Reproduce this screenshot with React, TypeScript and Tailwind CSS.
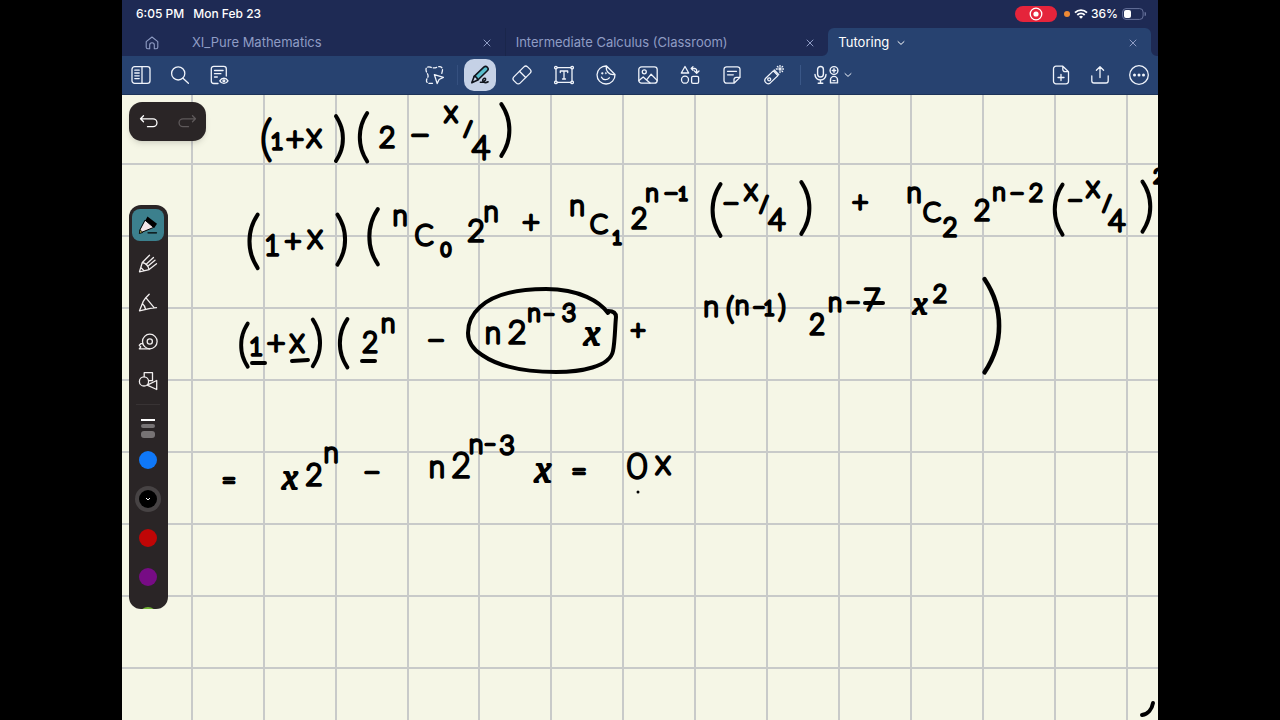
import type { ReactNode } from 'react';

// [text, center x, baseline, font size, cursive]
type Mark = [string, number, number, number, boolean?];

const inkLines: { id: string; marks: Mark[] }[] = [
  {
    id: 'line-1',
    marks: [
      ['(', 144, 60, 48], ['1', 155, 54, 22], ['+', 173, 55, 31], ['x', 192, 52, 34], [')', 218, 60, 52],
      ['(', 241, 60, 55], ['2', 265, 52, 28], ['−', 298, 53, 36], ['x', 329, 27, 30], ['/', 346, 41, 20],
      ['4', 359, 64, 31], [')', 384, 54, 60],
    ],
  },
  {
    id: 'line-2',
    marks: [
      ['(', 131, 166, 61], ['1', 150, 160, 27], ['+', 171, 157, 29], ['x', 193, 153, 34], [')', 220, 163, 57],
      ['(', 251, 162, 63], ['n', 278, 130, 27], ['C', 302, 150, 27], ['0', 324, 161, 17], ['2', 354, 146, 30],
      ['n', 369, 126, 27], ['+', 409, 138, 30], ['n', 455, 120, 28], ['C', 477, 138, 26], ['1', 495, 149, 17],
      ['2', 517, 133, 28], ['n', 530, 106, 24], ['−', 549, 107, 26], ['1', 561, 105, 17], ['(', 594, 134, 59],
      ['−', 609, 119, 30], ['x', 629, 105, 30], ['/', 642, 117, 21], ['4', 655, 135, 29], [')', 684, 132, 60],
      ['+', 738, 117, 28], ['n', 792, 107, 27], ['C', 810, 126, 26], ['2', 828, 141, 25], ['2', 860, 125, 28],
      ['n', 877, 105, 24], ['−', 895, 107, 26], ['2', 914, 106, 24], ['(', 936, 133, 58], ['−', 953, 115, 28],
      ['x', 971, 102, 30], ['/', 985, 116, 21], ['4', 995, 136, 29], [')', 1025, 130, 58], ['2', 1037, 88, 20],
    ],
  },
  {
    id: 'line-3',
    marks: [
      ['(', 122, 266, 49], ['1', 134, 260, 24], ['+', 154, 259, 32], ['x', 175, 257, 33], [')', 195, 265, 54],
      ['(', 221, 266, 56], ['2', 248, 257, 27], ['n', 266, 237, 26], ['−', 314, 256, 32],
      ['n', 371, 248, 29], ['2', 395, 248, 32], ['n', 412, 226, 24], ['−', 427, 226, 20], ['3', 447, 226, 24],
      ['x', 470, 250, 36, true], ['+', 516, 244, 26],
      ['n', 589, 221, 28], ['(', 608, 224, 30], ['n', 620, 219, 26], ['−', 637, 220, 22], ['1', 647, 220, 19],
      [')', 660, 222, 30], ['2', 695, 239, 27], ['n', 713, 216, 25], ['−', 731, 216, 26], ['7', 750, 215, 29],
      ['x', 798, 219, 32, true], ['2', 818, 207, 24], [')', 871, 265, 108],
    ],
  },
  {
    id: 'line-4',
    marks: [
      ['=', 107, 394, 24], ['x', 168, 394, 35, true], ['2', 192, 390, 29], ['n', 209, 367, 27], ['−', 250, 388, 30],
      ['n', 315, 382, 29], ['2', 339, 382, 33], ['n', 354, 358, 26], ['−', 368, 356, 20], ['3', 385, 359, 26],
      ['x', 421, 387, 37, true], ['=', 457, 385, 26], ['0', 515, 383, 34], ['x', 541, 379, 34],
    ],
  },
];

const gridX = [70, 142, 214, 286, 357, 429, 501, 573, 645, 717, 789, 861, 933, 1005];
const gridY = [69, 141, 213, 285, 357, 429, 501, 573];

const swatches = [
  { name: 'Blue', color: 'bg-[#0f78f8]' },
  { name: 'Black', color: 'bg-black', selected: true },
  { name: 'Red', color: 'bg-[#c00606]' },
  { name: 'Purple', color: 'bg-[#770c85]' },
  { name: 'Green', color: 'bg-[#76b838]' },
];

function Icon({ children }: { children: ReactNode }) {
  return (
    <svg
      viewBox="0 0 20 20"
      className="size-5"
      fill="none"
      stroke="currentColor"
      strokeWidth="1.3"
      strokeLinecap="round"
      strokeLinejoin="round"
      aria-hidden="true"
    >
      {children}
    </svg>
  );
}

function IconButton({ label, children, className = '' }: { label: string; children: ReactNode; className?: string }) {
  return (
    <button type="button" aria-label={label} className={`flex size-8 shrink-0 items-center justify-center ${className}`}>
      {children}
    </button>
  );
}

function CloseButton({ label }: { label: string }) {
  return (
    <button type="button" aria-label={label} className="flex size-4 items-center justify-center text-[#8f9cc4]">
      <svg viewBox="0 0 8 8" className="size-2" fill="none" stroke="currentColor" strokeWidth="1" strokeLinecap="round">
        <path d="M1 1l6 6M7 1L1 7" />
      </svg>
    </button>
  );
}

function Chevron() {
  return (
    <svg viewBox="0 0 8 8" className="size-2" fill="none" stroke="currentColor" strokeWidth="1" strokeLinecap="round" strokeLinejoin="round">
      <path d="M1 2.6L4 5.4l3-2.8" />
    </svg>
  );
}

function StatusBar() {
  return (
    <div className="flex h-7 items-center justify-between pr-3 pl-[14px] text-xs font-medium text-white">
      <div className="flex gap-[9px]">
        <span>6:05 PM</span>
        <span>Mon Feb 23</span>
      </div>
      <div className="flex items-center">
        <span className="flex h-4 w-[42px] items-center justify-center rounded-full bg-[#e5243b]">
          <svg viewBox="0 0 14 14" className="size-[14px]" fill="none" stroke="white" strokeWidth="1.3">
            <circle cx="7" cy="7" r="5.8" />
            <circle cx="7" cy="7" r="2.6" fill="white" stroke="none" />
          </svg>
        </span>
        <span className="ml-[7px] size-[6px] rounded-full bg-[#ee8a35]" />
        <svg viewBox="0 0 14 10" className="ml-1 h-[10px] w-[14px]" fill="none" stroke="white" strokeWidth="1.9">
          <path d="M1 3.6a8.6 8.6 0 0 1 12 0M3.3 6a5.4 5.4 0 0 1 7.4 0" />
          <path d="M7 9.8L5 7.7a2.9 2.9 0 0 1 4 0z" fill="white" stroke="none" />
        </svg>
        <span className="ml-[3px]">36%</span>
        <svg viewBox="0 0 24 12" className="ml-1 h-3 w-6" fill="none">
          <rect x=".6" y=".6" width="20.5" height="10.8" rx="3.4" stroke="#66719a" />
          <rect x="2" y="2" width="7" height="8" rx="2" fill="white" />
          <path d="M22.6 4v4a2 2 0 0 0 0-4z" fill="#66719a" />
        </svg>
      </div>
    </div>
  );
}

function Tabs() {
  return (
    <nav className="flex h-7 pr-[7px] text-[13px] text-[#8f9cc4]">
      <a href="#home" aria-label="Home" className="flex w-[60px] shrink-0 items-center justify-center pt-px">
        <svg viewBox="0 0 14 14" className="size-[14px]" fill="none" stroke="currentColor" strokeWidth="1.1" strokeLinejoin="round">
          <path d="M1.2 5.6L7 1l5.8 4.6v5.6a1.6 1.6 0 0 1-1.6 1.6H9.3V9a2.3 2.3 0 0 0-4.6 0v3.8H2.8a1.6 1.6 0 0 1-1.6-1.6z" />
        </svg>
      </a>
      <div className="flex min-w-0 flex-1 items-center justify-between border-r border-[#1a264b] px-[10px] pt-px">
        <a href="#pure">XI_Pure Mathematics</a>
        <CloseButton label="Close XI_Pure Mathematics" />
      </div>
      <div className="flex min-w-0 flex-1 items-center justify-between px-[10px] pt-px">
        <a href="#calculus">Intermediate Calculus (Classroom)</a>
        <CloseButton label="Close Intermediate Calculus (Classroom)" />
      </div>
      <div className="relative flex min-w-0 flex-1 items-center justify-between rounded-t-md bg-[#274270] px-[10px] pt-px text-white">
        <svg viewBox="0 0 6 6" className="absolute right-full bottom-0 size-[6px]" fill="#274270">
          <path d="M6 0v6H0a6 6 0 0 0 6-6z" />
        </svg>
        <a href="#tutoring" className="flex items-center gap-2">
          Tutoring
          <Chevron />
        </a>
        <CloseButton label="Close Tutoring" />
        <svg viewBox="0 0 6 6" className="absolute bottom-0 left-full size-[6px]" fill="#274270">
          <path d="M0 0v6h6a6 6 0 0 1-6-6z" />
        </svg>
      </div>
    </nav>
  );
}

function Toolbar() {
  return (
    <div className="flex h-[39px] items-center border-b border-[#1d3359] bg-[#274270] px-[3px] text-[#f0f4fb]">
      <div className="flex flex-1 gap-[7px]">
        <IconButton label="Sidebar">
          <Icon>
            <rect x="1" y="1.7" width="18" height="16.6" rx="2.6" />
            <path d="M11 1.7v16.6M3.8 5.2h4.4M3.8 8h4.4M3.8 10.8h4.4M3.8 13.6h4.4" />
          </Icon>
        </IconButton>
        <IconButton label="Search">
          <Icon>
            <circle cx="8.2" cy="8.4" r="6.6" />
            <path d="M13 13.3l5.4 5" />
          </Icon>
        </IconButton>
        <IconButton label="Outline">
          <Icon>
            <path d="M9 18.5H4.8a2.5 2.5 0 0 1-2.5-2.5V3.8a2.5 2.5 0 0 1 2.5-2.5h10a2.5 2.5 0 0 1 2.5 2.5V11M5.5 5.5h8.6M5.5 8.7h6.4M5.5 12h2.8" />
            <path d="M10.8 15.8c2-3.4 6.2-3.4 8.2 0-2 3.4-6.2 3.4-8.2 0z" />
            <circle cx="14.9" cy="15.8" r=".9" />
          </Icon>
        </IconButton>
      </div>

      <div className="flex items-center">
        <IconButton label="Lasso">
          <Icon>
            <path
              strokeDasharray="3.6 2"
              d="M7.5 18.3H4a2.5 2.5 0 0 1-2.5-2.8c0-2 1.6-2.6 1.6-4.6S1 7.5 1 4.5c0-3 3-2.9 4.5-2.3 2.5 1 4.5.9 7-.2 2.5-1 5 0 5 2.7 0 2-.8 3-.8 4.3"
            />
            <path d="M9.4 9.7l9 2.6-4.3 2.2-1.9 4.1z" />
          </Icon>
        </IconButton>
        <span className="mx-[6px] h-5 w-px bg-[#35507f]" />
        <div className="flex gap-[10px]">
          <IconButton label="Pen" className="rounded-[10px] bg-[#c5d1e6] text-[#10141c]">
            <Icon>
              <g strokeWidth="1.6">
                <path d="M4.2 11.3l9.6-9.1a2.5 2.5 0 0 1 3.5 3.6L7.8 15z" fill="#58bccb" />
                <path d="M4.2 11.3l-2.4 6.4 6-2.7c-.4-2-1.6-3.3-3.6-3.7z" fill="#c5d1e6" />
                <path d="M10.5 17.3c2.8-.3 5.4-1.6 5.1-3.4-.4-1.4-3-.5-2.9 1.6.1 2.4 3 2.7 5.4 1.3" />
              </g>
            </Icon>
          </IconButton>
          <IconButton label="Eraser">
            <Icon>
              <g transform="rotate(-45 10 10)">
                <rect x=".3" y="5.6" width="19.4" height="8.8" rx="2.6" />
                <path d="M10.8 5.6v8.8" />
              </g>
            </Icon>
          </IconButton>
          <IconButton label="Text">
            <Icon>
              <path d="M3.2 2.6h13.6M3.2 17.4h13.6M2 4v12M18 4v12" />
              <circle cx="1.9" cy="2.6" r="1.3" />
              <circle cx="18.1" cy="2.6" r="1.3" />
              <circle cx="1.9" cy="17.4" r="1.3" />
              <circle cx="18.1" cy="17.4" r="1.3" />
              <path d="M6.3 7.5V6h7.4v1.5M10 6v8M8.5 14h3" />
            </Icon>
          </IconButton>
          <IconButton label="Sticker">
            <Icon>
              <path d="M10.5 1A9 9 0 1 0 19 9.5zM10.5 1c-1 5 2.5 9.5 8.5 8.5" />
              <path d="M5.5 12.2c1.5 3 5.5 3.4 7.8.6" />
              <circle cx="6.3" cy="8.3" r=".5" fill="currentColor" />
              <circle cx="9.8" cy="8.3" r=".3" fill="currentColor" />
            </Icon>
          </IconButton>
          <IconButton label="Image">
            <Icon>
              <rect x=".8" y="1.8" width="18.4" height="16.4" rx="2.8" />
              <circle cx="6.3" cy="6.8" r="2" />
              <path d="M1 15.5l4.2-3.6 6.8 6.2M8.6 14.8l4.5-5.6 6 6.2" />
            </Icon>
          </IconButton>
          <IconButton label="Elements">
            <Icon>
              <path d="M5 1.5L8.7 8H1.3zM11.5 3.5h3.2a2 2 0 0 1 2 2v2.6M14.4 6l2.3 2.3L19 6M13 1.6l-1.8 1.9L13 5.4" />
              <circle cx="5" cy="14.7" r="3.5" />
              <rect x="11.6" y="11.3" width="7" height="7" rx="1.4" />
            </Icon>
          </IconButton>
          <IconButton label="Sticky note">
            <Icon>
              <path d="M12 18.2H4.6A2.6 2.6 0 0 1 2 15.6V4.4a2.6 2.6 0 0 1 2.6-2.6h10.8A2.6 2.6 0 0 1 18 4.4v8zM12 18.2v-3.6a2.2 2.2 0 0 1 2.2-2.2H18M5.5 6.3h9M5.5 9.8h5.8" />
            </Icon>
          </IconButton>
          <IconButton label="Laser pointer">
            <Icon>
              <path d="M1.7 13.2l7.6-7.3 4.6 4.7-7.6 7.3a3.3 3.3 0 0 1-4.6-4.7zM10.3 5l4.5 4.6" />
              <circle cx="5.2" cy="14.3" r="1.5" />
              <path d="M16 .4v1M16 6.6v1M12.3 4h1M18.7 4h1M13.4 1.4l.6.6M18 6l.6.6M18.6 1.4l-.6.6" />
              <circle cx="16" cy="4" r="1" />
            </Icon>
          </IconButton>
        </div>
        <span className="mx-[10px] h-5 w-px bg-[#3a5787]" />
        <button type="button" aria-label="Record" className="flex h-8 w-[50px] items-center gap-1 pl-[3px]">
          <svg viewBox="0 0 26 20" className="h-5 w-[26px]" fill="none" stroke="currentColor" strokeWidth="1.4" strokeLinecap="round" strokeLinejoin="round">
            <rect x="3.6" y="1.5" width="5.8" height="10.5" rx="2.9" />
            <path d="M1 9.5a5.5 5.5 0 0 0 11 0M6.5 15v3.3M4.2 18.3h4.6" />
            <circle cx="20" cy="5.5" r="3.9" />
            <path d="M20 3.8v3.4M18.3 5.5h3.4M16.5 17.9v-3a3.5 3.5 0 0 1 7 0v3zM19 15.6h2" />
          </svg>
          <Chevron />
        </button>
      </div>

      <div className="flex flex-1 justify-end gap-[7px]">
        <IconButton label="Add page">
          <Icon>
            <path d="M11.8 1.2H5a2.5 2.5 0 0 0-2.5 2.5v12.6A2.5 2.5 0 0 0 5 18.8h10a2.5 2.5 0 0 0 2.5-2.5V6.7zM11.8 1.2v3.3A2.2 2.2 0 0 0 14 6.7h3.5M10 9.5v6M7 12.5h6" />
          </Icon>
        </IconButton>
        <IconButton label="Share">
          <Icon>
            <path d="M1.8 10.8v5A2.2 2.2 0 0 0 4 18h12a2.2 2.2 0 0 0 2.2-2.2v-5M10 12.5V1.8M6.4 5.3L10 1.7l3.6 3.6" />
          </Icon>
        </IconButton>
        <IconButton label="More">
          <Icon>
            <circle cx="10" cy="10" r="9.3" />
            <g fill="currentColor" stroke="none">
              <circle cx="5.5" cy="10" r="1.5" />
              <circle cx="10" cy="10" r="1.5" />
              <circle cx="14.5" cy="10" r="1.5" />
            </g>
          </Icon>
        </IconButton>
      </div>
    </div>
  );
}

function History() {
  return (
    <div className="absolute top-[7px] left-[7px] flex rounded-[13px] bg-[#2a2526] text-white shadow-md shadow-black/10">
      <button type="button" aria-label="Undo" className="flex h-[39px] w-[39px] items-center justify-center">
        <Icon>
          <path d="M4.5 3.8l-3 3 3 3M1.5 6.8H14a3.9 3.9 0 0 1 0 7.9H8.5" />
        </Icon>
      </button>
      <button type="button" aria-label="Redo" disabled className="flex h-[39px] w-[38px] items-center justify-center text-[#5e595a]">
        <Icon>
          <path d="M15.5 3.8l3 3-3 3M18.5 6.8H6a3.9 3.9 0 0 0 0 7.9h5.5" />
        </Icon>
      </button>
    </div>
  );
}

function Palette() {
  return (
    <div className="absolute top-[110px] left-[7px] flex h-[404px] w-[39px] flex-col items-center overflow-hidden rounded-[12px] bg-[#2a2526] pt-1 pr-px text-[#f1eeee]">
      <div className="flex flex-col gap-[7px]">
        <IconButton label="Fountain pen" className="rounded-lg bg-[#3c808d]">
          <Icon>
            <path d="M9.5 1.5L19 8.8 16.2 13 7.3 5.6z" fill="#000" stroke="none" />
            <path d="M7.3 5.4l8.3 7L4.5 17l-2.8.8.4-3z" fill="#f3e6e8" stroke="#000" strokeWidth="1" />
            <path d="M1.4 18.2l.6-3.4 2.6 2.4z" fill="#b9a84a" stroke="#000" strokeWidth=".8" />
            <path d="M10 17.8h8.5" stroke="#000" />
          </Icon>
        </IconButton>
        <IconButton label="Ballpoint pen">
          <Icon>
            <path d="M11.5 1.2L4.3 8.5 1.5 17.8l9.6-2.2 7.4-5.9M4.3 8.5c3 .6 6 3.3 6.8 7.1M15.5 3.5l-7.3 6.7M2.8 13.5l3.2 3.2M17 6.2l-6.3 5.3" />
          </Icon>
        </IconButton>
        <IconButton label="Brush pen">
          <Icon>
            <path d="M11.2 1.2L7.8 4.7l-2.7 4-3.6 9.1 10.8-2.5 6.2-.6M7.8 4.7l8.3 10M4.5 10.8c1.5 1.2 2.8 3.3 3 5.4" />
          </Icon>
        </IconButton>
        <IconButton label="Tape">
          <Icon>
            <circle cx="11.8" cy="9.5" r="7.3" />
            <circle cx="11.8" cy="9.5" r="2.6" />
            <path d="M11.8 16.8H1.3l1.5-1.9-1.5-1.7 1.5-1.5h1.9" />
          </Icon>
        </IconButton>
        <IconButton label="Shapes">
          <Icon>
            <path d="M6.2 5.6V1.7h8.3v8h-3.6" />
            <circle cx="6" cy="10.4" r="4.6" />
            <path d="M9.2 14.2l9.5-4.7v9z" />
          </Icon>
        </IconButton>
      </div>
      <span className="my-[7px] h-px w-6 shrink-0 bg-[#383334]" />
      <button type="button" aria-label="Stroke width" className="flex h-8 w-8 shrink-0 flex-col items-center justify-center gap-[3px]">
        <span className="h-[2px] w-[14px] bg-white" />
        <span className="h-1 w-[14px] rounded-sm bg-[#777374]" />
        <span className="h-[7px] w-[14px] rounded-[3px] bg-[#777374]" />
      </button>
      <div className="flex flex-col gap-[7px]">
        {swatches.map((swatch) => (
          <IconButton key={swatch.name} label={swatch.name}>
            {swatch.selected ? (
              <span className="flex size-[26px] items-center justify-center rounded-full bg-[#474344] text-white">
                <span className={`flex size-[18px] items-center justify-center rounded-full ${swatch.color}`}>
                  <svg viewBox="0 0 6 6" className="size-[6px]" fill="none" stroke="currentColor">
                    <path d="M1 2l2 2 2-2" />
                  </svg>
                </span>
              </span>
            ) : (
              <span className={`size-[18px] rounded-full ${swatch.color}`} />
            )}
          </IconButton>
        ))}
      </div>
    </div>
  );
}

function Page() {
  return (
    <svg className="absolute inset-0 h-full w-full" role="group" aria-label="Notebook page">
      <g stroke="#c8cac9" strokeWidth="2">
        {gridX.map((x) => (
          <line key={x} x1={x} x2={x} y1="0" y2="100%" />
        ))}
        {gridY.map((y) => (
          <line key={y} x1="0" x2="100%" y1={y} y2={y} />
        ))}
      </g>
      {inkLines.map((line) => (
        <g key={line.id} fill="#000" stroke="#000" strokeLinejoin="round" textAnchor="middle">
          {line.marks.map(([text, x, y, size, cursive]) => (
            <text
              key={`${text}-${x}`}
              x={x}
              y={y}
              fontSize={size}
              strokeWidth={cursive ? 2 : 3.4}
              className={cursive ? "font-['Liberation_Serif',serif] italic" : "font-['Lato',sans-serif] font-thin"}
            >
              {text}
            </text>
          ))}
        </g>
      ))}
      <g fill="none" stroke="#000" strokeWidth="4" strokeLinecap="round" strokeLinejoin="round">
        <path d="M486 218C478 207 458 194 424 194c-30 0-53 6-66 18-9 8-12 17-12 26 0 10 6 17 14 22 16 11 42 17 74 17 24 0 54-5 57-21 2-10 2-24 3-34 0-4-3-6-8-6" />
        <path d="M130 268h13M170 266l16-1M240 266h13M743 208h18" />
        <path d="M1031 608c-1 6-5 11-11 12" />
        <path d="M516 397v0" strokeWidth="3" />
      </g>
    </svg>
  );
}

export default function App() {
  return (
    <div className="flex min-h-screen bg-black px-[122px] font-['Inter',sans-serif]">
      <div className="flex min-w-0 flex-1 flex-col">
        <header className="bg-[#1e2a54]">
          <StatusBar />
          <Tabs />
          <Toolbar />
        </header>
        <main className="relative min-h-[520px] flex-1 overflow-hidden bg-[#f5f6e6]">
          <Page />
          <History />
          <Palette />
        </main>
      </div>
    </div>
  );
}
